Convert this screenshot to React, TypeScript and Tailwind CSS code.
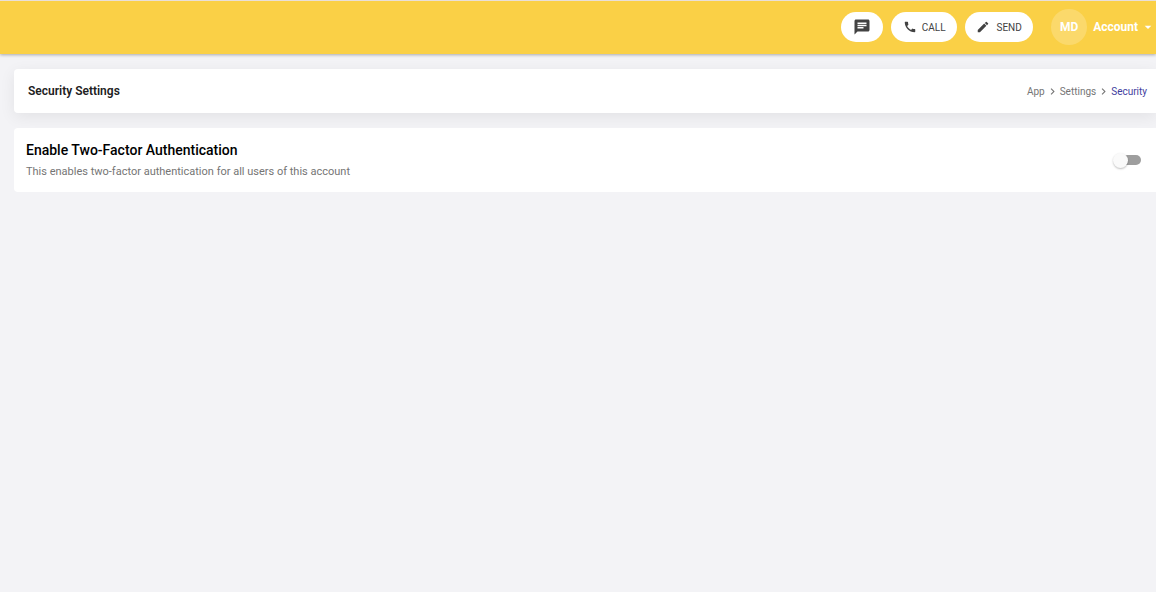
import { useState } from "react"
import { MdArrowDropDown, MdCall, MdChat, MdChevronRight, MdEdit } from "react-icons/md"

function Header() {
  return (
    <header className="relative flex h-[54px] items-center justify-end border-t border-[#e9dfd8] bg-[#fad046] pb-px shadow-[0_1px_3px_rgba(0,0,0,0.3)]">
      <div className="flex items-center gap-2">
        <button aria-label="Messages" className="flex h-[30px] w-[42px] items-center justify-center rounded-full bg-white text-[#424242]">
          <MdChat size={18} />
        </button>
        <button className="flex h-[30px] w-[66px] items-center justify-center gap-[5px] rounded-full bg-white text-[10px] text-[#424242]">
          <MdCall size={14} />
          CALL
        </button>
        <button className="flex h-[30px] w-[68px] items-center justify-center gap-[6px] rounded-full bg-white text-[10px] text-[#424242]">
          <MdEdit size={14} />
          SEND
        </button>
      </div>
      <button className="ml-[18px] flex items-center text-xs font-bold text-white">
        <span className="mr-[6px] flex h-9 w-9 items-center justify-center rounded-full bg-white/20">MD</span>
        Account
        <MdArrowDropDown size={16} className="ml-[2px]" />
      </button>
    </header>
  )
}

function Breadcrumb() {
  return (
    <nav aria-label="Breadcrumb" className="flex items-center gap-px text-[10px] text-[#757575]">
      <a href="#app">App</a>
      <MdChevronRight size={13} />
      <a href="#settings">Settings</a>
      <MdChevronRight size={13} />
      <a href="#security" aria-current="page" className="text-[#3f3d9e]">
        Security
      </a>
    </nav>
  )
}

export default function App() {
  const [enabled, setEnabled] = useState(false)

  return (
    <div className="min-h-screen bg-[#f3f3f6] font-[Roboto,sans-serif]">
      <Header />
      <main className="flex flex-col gap-[15px] pt-[15px] pl-[14px]">
        <div className="flex h-11 items-center justify-between rounded-l bg-white pr-[9px] pl-[14px] shadow-[0_4px_16px_rgba(0,0,0,0.07)]">
          <h1 className="text-xs font-semibold text-[#212121]">Security Settings</h1>
          <Breadcrumb />
        </div>
        <section className="relative flex h-16 items-center justify-between rounded-l bg-white pr-[15px] pl-3">
          <div className="pt-[2px]">
            <label htmlFor="two-factor" className="block text-sm leading-5 font-medium text-black">
              Enable Two-Factor Authentication
            </label>
            <p id="two-factor-hint" className="pt-[2px] text-[11px] leading-5 text-[#757575]">
              This enables two-factor authentication for all users of this account
            </p>
          </div>
          <input
            id="two-factor"
            type="checkbox"
            aria-describedby="two-factor-hint"
            checked={enabled}
            onChange={(e) => setEnabled(e.target.checked)}
            className="flex h-[10px] w-[26px] appearance-none items-center rounded-full bg-[#9e9e9e] before:-ml-[2px] before:h-[15px] before:w-[15px] before:shrink-0 before:rounded-full before:bg-[#fafafa] before:shadow-[0_1px_2px_rgba(0,0,0,0.25)] checked:bg-[#fad046] checked:before:ml-[13px]"
          />
        </section>
      </main>
    </div>
  )
}
